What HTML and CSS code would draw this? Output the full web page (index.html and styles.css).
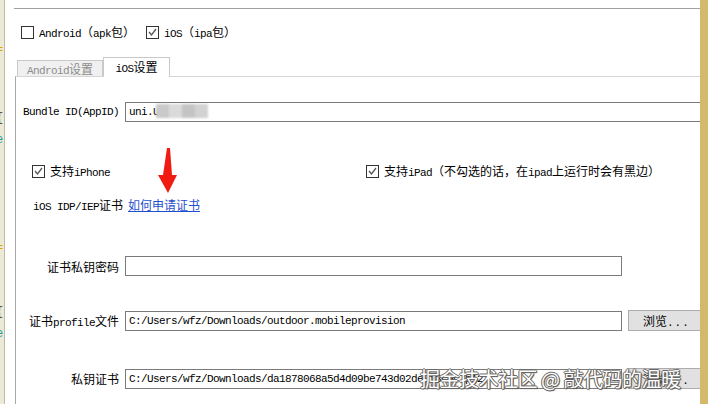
FILE: index.html
```html
<!DOCTYPE html>
<html lang="zh-CN">
<head>
    <meta charset="UTF-8">
    <title>App打包配置</title>
    <link rel="stylesheet" href="styles.css">
</head>
<body>
    <div class="window">
        <div class="gutter">
            <div class="g g-eq">=</div>
            <div class="g g-brace1">{</div>
            <div class="g g-e">e</div>
            <div class="g g-eq2">=</div>
            <div class="g g-brace2">{</div>
            <div class="g g-e">e</div>
        </div>
        <div class="main">
            <div class="frame">
                <div class="targets">
                    <label class="check"><span class="box"></span><span><span class="en">Android</span>（<span class="en">apk</span>包）</span></label>
                    <label class="check"><span class="box checked"><svg width="11" height="11" viewBox="0 0 11 11"><polyline points="2,5 4.5,8 9,2" fill="none" stroke="#555" stroke-width="1.3"/></svg></span><span><span class="en">iOS</span>（<span class="en">ipa</span>包）</span></label>
                </div>
                <div class="tabs">
                    <div class="tab"><span class="en">Android</span>设置</div>
                    <div class="tab active"><span class="en">iOS</span>设置</div>
                </div>
                <div class="pane">
                    <div class="field bundle">
                        <span class="label en">Bundle ID(AppID)</span>
                        <div class="value wide">uni.U<span class="blurred"></span></div>
                    </div>
                    <div class="devices">
                        <label class="check"><span class="box checked"><svg width="11" height="11" viewBox="0 0 11 11"><polyline points="2,5 4.5,8 9,2" fill="none" stroke="#555" stroke-width="1.3"/></svg></span><span>支持<span class="en">iPhone</span></span></label>
                        <label class="check"><span class="box checked"><svg width="11" height="11" viewBox="0 0 11 11"><polyline points="2,5 4.5,8 9,2" fill="none" stroke="#555" stroke-width="1.3"/></svg></span><span>支持<span class="en">iPad</span>（不勾选的话，在<span class="en">ipad</span>上运行时会有黑边）</span></label>
                    </div>
                    <div class="cert-line">
                        <span><span class="en">iOS IDP/IEP</span>证书</span>
                        <a href="#" class="help-link">如何申请证书</a>
                    </div>
                    <div class="field password">
                        <span class="label">证书私钥密码</span>
                        <div class="value"></div>
                    </div>
                    <div class="field profile">
                        <span class="label">证书<span class="en">profile</span>文件</span>
                        <div class="value">C:/Users/wfz/Downloads/outdoor.mobileprovision</div>
                        <button class="btn">浏览<span class="en">...</span></button>
                    </div>
                    <div class="field key">
                        <span class="label">私钥证书</span>
                        <div class="value">C:/Users/wfz/Downloads/da1878068a5d4d09be743d02de8f3c9c.p12</div>
                        <button class="btn">浏览<span class="en">...</span></button>
                    </div>
                </div>
            </div>
        </div>
        <div class="edge"></div>
    </div>

    <!-- red pointer to the help link -->
    <svg class="arrow" width="24" height="50" viewBox="0 0 24 50">
        <polygon points="9,1 12,1 14,28 19,28 10,46 0,28 5,28" fill="#f01c12"/>
    </svg>

    <div class="watermark">掘金技术社区 @ 敲代码的温暖</div>
</body>
</html>
```

FILE: styles.css
```css
body {
    margin: 0;
    width: 708px;
    height: 404px;
    overflow: hidden;
    position: relative;
    background: #fff;
    color: #000;
    font-family: "Noto Sans CJK SC", sans-serif;
    font-size: 12px;
}
.en {
    font-family: "Liberation Mono", "Noto Sans CJK SC", monospace;
    font-size: 11px;
    letter-spacing: -0.6px;
}
.window {
    display: flex;
    height: 404px;
}

/* editor gutter on the left */
.gutter {
    width: 4px;
    flex-shrink: 0;
    background: #ecead6;
    border-right: 1px solid #bdbba8;
    overflow: hidden;
    font-family: "Liberation Mono", monospace;
    font-size: 12px;
    line-height: 12px;
}
.g {
    margin-left: -4px;
    height: 12px;
}
.g-eq { margin-top: 44px; color: #d8a400; }
.g-brace1 { margin-top: 56px; color: #555; }
.g-e { margin-top: 10px; color: #1a9c9c; }
.g-eq2 { margin-top: 96px; color: #d8a400; }
.g-brace2 { margin-top: 52px; color: #555; }

.main {
    flex: 1;
    overflow: hidden;
}
.edge {
    width: 8px;
    flex-shrink: 0;
    background: #d4b96c;
}
.frame {
    margin: 8px 0 0 9px;
    border-top: 1px solid #a0a0a0;
}

.check {
    display: flex;
    align-items: center;
    gap: 5px;
    height: 13px;
    line-height: 13px;
    white-space: nowrap;
}
.box {
    width: 13px;
    height: 13px;
    box-sizing: border-box;
    border: 1px solid #333;
    background: #fff;
    display: flex;
    align-items: center;
    justify-content: center;
    flex-shrink: 0;
}

.targets {
    display: flex;
    margin-top: 17px;
    padding-left: 7px;
}
.targets .check + .check {
    margin-left: 11px;
}

.tabs {
    display: flex;
    align-items: flex-start;
    height: 20px;
    margin: 18px 0 -1px 3px;
    position: relative;
    z-index: 1;
}
.tab {
    box-sizing: border-box;
    width: 86px;
    height: 16px;
    margin-top: 3px;
    border: 1px solid #c9c9c9;
    border-bottom: none;
    background: #f0f0f0;
    color: #8c8c8c;
    text-align: center;
    line-height: 15px;
}
.tab.active {
    width: 67px;
    height: 20px;
    margin-top: 0;
    background: #fff;
    color: #000;
    line-height: 18px;
}

.pane {
    margin-left: 1px;
    width: 1000px;
    height: 340px;
    border-top: 1px solid #d5d5d5;
    border-left: 1px solid #a8a8a8;
}
.field {
    display: grid;
    grid-template-columns: 103px 497px auto;
    column-gap: 6px;
    align-items: center;
}
.label {
    text-align: right;
    white-space: nowrap;
}
.value {
    box-sizing: border-box;
    height: 20px;
    border: 1px solid #7a7a7a;
    background: #fff;
    padding-left: 3px;
    line-height: 18px;
    white-space: nowrap;
    overflow: hidden;
    font-family: "Liberation Mono", monospace;
    font-size: 11px;
    letter-spacing: -0.6px;
}
.value.wide {
    width: 600px;
}
.blurred {
    display: inline-block;
    vertical-align: top;
    width: 52px;
    height: 14px;
    margin: 1px 0 0 -3px;
    background: linear-gradient(90deg, #c9c9c9 0 25%, #dadada 25% 50%, #c4c4c4 50% 75%, #d2d2d2 75%);
    filter: blur(0.8px);
}
.btn {
    box-sizing: border-box;
    width: 80px;
    height: 21px;
    border: 1px solid #acacac;
    background: #e1e1e1;
    text-align: left;
    padding: 0 0 0 14px;
    font-family: "Noto Sans CJK SC", sans-serif;
    font-size: 12px;
    color: #000;
}
.btn .en {
    letter-spacing: 1px;
}

.bundle { margin-top: 25px; }
.devices {
    display: flex;
    margin-top: 43px;
    padding-left: 16px;
}
.devices .check:first-child {
    width: 334px;
}
.cert-line {
    display: flex;
    gap: 5px;
    margin-top: 20px;
    padding-left: 17px;
    height: 14px;
    line-height: 14px;
}
.help-link {
    color: #1f4fcf;
    text-decoration: underline;
}
.password { margin-top: 44px; }
.profile { margin-top: 34px; }
.key { margin-top: 37px; }

.arrow {
    position: absolute;
    left: 158px;
    top: 147px;
}
.watermark {
    position: absolute;
    left: 420px;
    top: 364px;
    font-size: 20px;
    color: #fff;
    letter-spacing: -0.5px;
    white-space: nowrap;
    text-shadow: 1px 0 0 #666, -1px 0 0 #666, 0 1px 0 #666, 0 -1px 0 #666, 1px 1px 1px #444;
}
```
